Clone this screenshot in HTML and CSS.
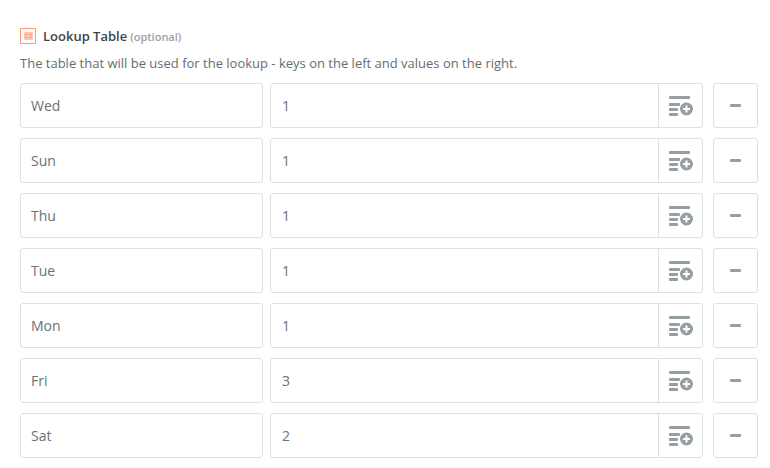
FILE: index.html
```html
<!DOCTYPE html>
<html lang="en">
<head>
    <meta charset="UTF-8">
    <title>Lookup Table</title>
    <link rel="stylesheet" href="styles.css">
</head>
<body>
    <svg class="sprite" width="0" height="0">
        <symbol id="list-add" viewBox="0 0 24 20">
            <rect x="0" y="0" width="21" height="3" rx="1"/>
            <rect x="0" y="7" width="11" height="3" rx="1"/>
            <rect x="0" y="12" width="9" height="3" rx="1"/>
            <rect x="0" y="17" width="9" height="3" rx="1"/>
            <path fill-rule="evenodd" d="M17.500 6.500a6.500 6.500 0 1 1 0 13a6.500 6.500 0 1 1 0-13zM16.500 9.500v2.500h-2.500v2h2.500v2.500h2v-2.500h2.500v-2h-2.500v-2.500z"/>
        </symbol>
    </svg>

    <div class="field">
        <div class="field-label">
            <span class="field-icon">
                <svg width="9" height="8" viewBox="0 0 9 8">
                    <rect width="9" height="8" rx="1" fill="#ffc4ab"/>
                    <path d="M1 2.500h3M6 2.500h2M1 5.500h2M5 5.500h3" stroke="#ff9a73" stroke-width="1"/>
                </svg>
            </span>
            <span class="field-name">Lookup Table</span>
            <span class="field-optional">(optional)</span>
        </div>
        <p class="field-help">The table that will be used for the lookup - keys on the left and values on the right.</p>

        <div class="rows">
            <div class="row">
                <div class="box key">Wed</div>
                <div class="box value"><span class="value-text">1</span><span class="value-btn"><svg width="24" height="20"><use href="#list-add"/></svg></span></div>
                <div class="box remove"><span class="minus"></span></div>
            </div>
            <div class="row">
                <div class="box key">Sun</div>
                <div class="box value"><span class="value-text">1</span><span class="value-btn"><svg width="24" height="20"><use href="#list-add"/></svg></span></div>
                <div class="box remove"><span class="minus"></span></div>
            </div>
            <div class="row">
                <div class="box key">Thu</div>
                <div class="box value"><span class="value-text">1</span><span class="value-btn"><svg width="24" height="20"><use href="#list-add"/></svg></span></div>
                <div class="box remove"><span class="minus"></span></div>
            </div>
            <div class="row">
                <div class="box key">Tue</div>
                <div class="box value"><span class="value-text">1</span><span class="value-btn"><svg width="24" height="20"><use href="#list-add"/></svg></span></div>
                <div class="box remove"><span class="minus"></span></div>
            </div>
            <div class="row">
                <div class="box key">Mon</div>
                <div class="box value"><span class="value-text">1</span><span class="value-btn"><svg width="24" height="20"><use href="#list-add"/></svg></span></div>
                <div class="box remove"><span class="minus"></span></div>
            </div>
            <div class="row">
                <div class="box key">Fri</div>
                <div class="box value"><span class="value-text">3</span><span class="value-btn"><svg width="24" height="20"><use href="#list-add"/></svg></span></div>
                <div class="box remove"><span class="minus"></span></div>
            </div>
            <div class="row">
                <div class="box key">Sat</div>
                <div class="box value"><span class="value-text">2</span><span class="value-btn"><svg width="24" height="20"><use href="#list-add"/></svg></span></div>
                <div class="box remove"><span class="minus"></span></div>
            </div>
        </div>
    </div>
</body>
</html>
```

FILE: styles.css
```css
* {
    margin: 0;
    padding: 0;
    box-sizing: border-box;
}

body {
    font-family: 'Open Sans', sans-serif;
    background: #fff;
    color: #666;
    overflow: hidden;
}

.sprite {
    display: block;
}

.field {
    padding: 28px 12px 0 20px;
}

.field-label {
    display: flex;
    align-items: center;
    height: 16px;
}

.field-icon {
    width: 16px;
    height: 16px;
    border: 1px solid #ff9a73;
    display: flex;
    justify-content: center;
    align-items: center;
    margin-right: 7px;
}

.field-name {
    font-size: 13px;
    font-weight: 600;
    color: #3f4447;
}

.field-optional {
    font-size: 11px;
    font-weight: 600;
    color: #9aa1a5;
    margin-left: 3px;
}

.field-help {
    font-size: 13px;
    line-height: 18px;
    color: #666d70;
    margin-top: 10px;
    margin-bottom: 11px;
}

.rows {
    display: flex;
    flex-direction: column;
    gap: 10px;
}

.row {
    display: flex;
    height: 45px;
}

.box {
    border: 1px solid #dbe1e4;
    border-radius: 3px;
    background: #fff;
    font-size: 14px;
    color: #6b7275;
}

.key {
    width: 243px;
    padding-left: 10px;
    line-height: 43px;
    margin-right: 7px;
}

.value {
    width: 433px;
    display: flex;
    margin-right: 10px;
}

.value-text {
    flex: 1;
    padding-left: 11px;
    line-height: 43px;
}

.value-btn {
    width: 44px;
    border-left: 1px solid #dbe1e4;
    display: flex;
    justify-content: center;
    align-items: center;
    padding-top: 1px;
    fill: #969ea1;
}

.remove {
    width: 45px;
    display: flex;
    justify-content: center;
    align-items: center;
}

.minus {
    width: 11px;
    height: 3px;
    border-radius: 1px;
    background: #969ea1;
}
```
